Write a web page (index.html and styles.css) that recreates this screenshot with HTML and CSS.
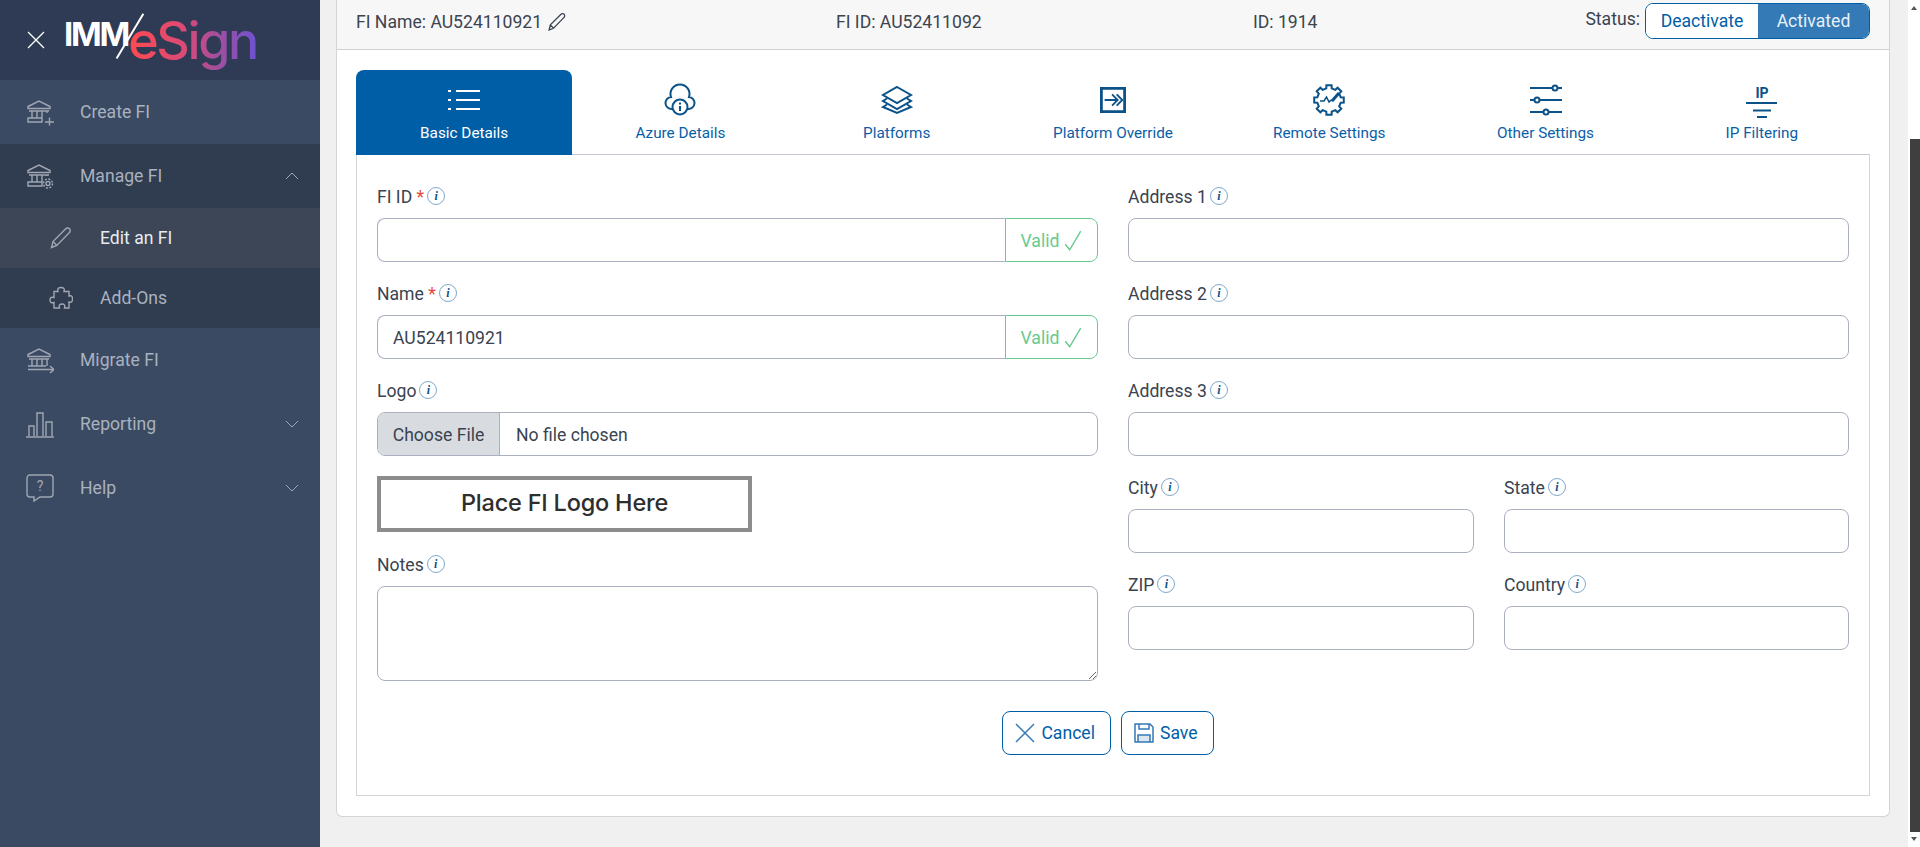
FILE: index.html
```html
<!DOCTYPE html>
<html lang="en">
<head>
<meta charset="utf-8">
<title>IMM eSign - Edit an FI</title>
<link rel="stylesheet" href="styles.css">
</head>
<body>
<aside class="sidebar">
  <div class="brand">
    <svg class="close-icon" viewBox="0 0 18 18"><path d="M1 1l16 16M17 1L1 17"/></svg>
    <div class="logo"><span class="logo-imm">IMM</span><span class="logo-slash"></span><span class="logo-esign">eSign</span></div>
  </div>
  <nav class="menu">
    <a class="item item-first">
      <svg class="item-icon" viewBox="0 0 28 28"><path d="M2 8.500 13 3l11 5.500v2H2zM3 13h20M6 13v7M11 13v7M16 13v7M21 13v2M2 20h14v4H2zM19 24h9M23.500 19.500v8"/></svg>
      <span>Create FI</span>
    </a>
    <a class="item item-open">
      <svg class="item-icon" viewBox="0 0 28 28"><path d="M2 8.500 13 3l11 5.500v2H2zM3 13h20M6 13v7M11 13v7M16 13v7M21 13v1M2 20h14v4H2z"/><circle cx="22" cy="21.500" r="2"/><circle cx="22" cy="21.500" r="4.500" stroke-dasharray="2 1.500"/></svg>
      <span>Manage FI</span>
      <svg class="chev" viewBox="0 0 14 8"><path d="M1 7l6-6 6 6"/></svg>
    </a>
    <a class="sub sub-active">
      <svg class="item-icon" viewBox="0 0 24 24"><path d="M2.500 21.500l1.500-6L16.500 3c1.300-1.300 3-1.300 4 -.3s1 2.800-.3 4L7.800 19.500zM4 15.500l4 4"/></svg>
      <span>Edit an FI</span>
    </a>
    <a class="sub">
      <svg class="item-icon" viewBox="0 0 24 24"><path d="M9 5.500C8 2 10 1.500 12 1.500S16 2 15 5.500h5V10c3-1 3.500 1 3.500 3s-.5 4-3.500 3v6h-4.500c1-3-.5-4-2.500-4s-3.500 1-2.500 4H5v-5.500c-3 1-4-.5-4-2.500s1-3.500 4-2.500v-6z"/></svg>
      <span>Add-Ons</span>
    </a>
    <a class="item">
      <svg class="item-icon" viewBox="0 0 28 28"><path d="M2 8.500 13 3l11 5.500v2H2zM3 13h20M6 13v7M11 13v7M16 13v7M21 13v7M2 20h18M2 23.500h26M24 20l4 3.500-4 3.500"/></svg>
      <span>Migrate FI</span>
    </a>
    <a class="item">
      <svg class="item-icon" viewBox="0 0 28 28"><path d="M0 27h28M3 26V16h5v10M11 26V3h6v23M20 26V12h6v14"/></svg>
      <span>Reporting</span>
      <svg class="chev" viewBox="0 0 14 8"><path d="M1 1l6 6 6-6"/></svg>
    </a>
    <a class="item">
      <svg class="item-icon" viewBox="0 0 28 28"><path d="M4 1h20a3 3 0 0 1 3 3v16a3 3 0 0 1-3 3H14l-6 4v-4H4a3 3 0 0 1-3-3V4a3 3 0 0 1 3-3z"/><text class="help-mark" x="14" y="17">?</text></svg>
      <span>Help</span>
      <svg class="chev" viewBox="0 0 14 8"><path d="M1 1l6 6 6-6"/></svg>
    </a>
  </nav>
</aside>

<main class="main">
  <section class="card">
    <header class="card-head">
      <div class="head-cell head-name">FI Name: AU524110921
        <svg class="head-pencil" viewBox="0 0 24 24"><path d="M2.500 21.500l1.500-6L16.500 3c1.300-1.300 3-1.300 4-.3s1 2.800-.3 4L7.800 19.500zM4 15.500l4 4"/></svg>
      </div>
      <div class="head-cell head-fi">FI ID: AU52411092</div>
      <div class="head-cell head-id">ID: 1914</div>
      <div class="head-status">
        <span class="status-label">Status:</span>
        <div class="toggle"><button class="toggle-off">Deactivate</button><button class="toggle-on">Activated</button></div>
      </div>
    </header>
    <div class="card-body">
      <div class="tabs">
        <a class="tab tab-active">
          <svg class="tab-icon" viewBox="0 0 32 24"><path d="M8 3h24M8 12h24M8 21h24M0 3h3M0 12h3M0 21h3"/></svg>
          <span>Basic Details</span>
        </a>
        <a class="tab">
          <svg class="tab-icon" viewBox="0 0 32 32"><path d="M8 25A6 6 0 0 1 7 13 9.500 9.500 0 1 1 25 13 6 6 0 0 1 24 25"/><circle cx="16" cy="23" r="7.500"/><path d="M16 22v5M16 18.500v2"/></svg>
          <span>Azure Details</span>
        </a>
        <a class="tab">
          <svg class="tab-icon" viewBox="0 0 32 30"><path d="M16 2 30 10 16 18 2 10zM6 13.500 2 16l14 8 14-8-4-2.500M6 19.500 2 22l14 6 14-6-4-2.500"/></svg>
          <span>Platforms</span>
        </a>
        <a class="tab">
          <svg class="tab-icon tab-icon-sm" viewBox="0 0 28 28"><path class="thick" d="M1.500 1.500h25v25h-25z"/><path d="M5 14h14M13 8l6 6-6 6M18 8l6 6-6 6"/></svg>
          <span>Platform Override</span>
        </a>
        <a class="tab">
          <svg class="tab-icon" viewBox="0 0 32 32"><path d="M13.300 4.310 13.400 1.230H18.600L18.700 4.310 22.360 5.820 24.610 3.720 28.280 7.390 26.180 9.640 27.690 13.300 30.770 13.400V18.600L27.690 18.700 26.180 22.360 28.280 24.610 24.610 28.280 22.360 26.180 18.700 27.690 18.600 30.770H13.400L13.300 27.690 9.640 26.180 7.390 28.280 3.720 24.610 5.820 22.360 4.310 18.700 1.230 18.600V13.400L4.310 13.300 5.820 9.640 3.720 7.390 7.390 3.720 9.640 5.820z"/><path class="thin" d="M7 17h4l2.500-4 2.500 5 1.500-1.500H20"/><path class="thick" d="M19 17l7-8"/></svg>
          <span>Remote Settings</span>
        </a>
        <a class="tab">
          <svg class="tab-icon" viewBox="0 0 32 30"><path d="M0 3h22M28 3h4M0 15h4M10 15h22M0 27h13M19 27h13"/><circle cx="25" cy="3" r="2.500"/><circle cx="7" cy="15" r="2.500"/><circle cx="16" cy="27" r="2.500"/></svg>
          <span>Other Settings</span>
        </a>
        <a class="tab">
          <svg class="tab-icon" viewBox="0 0 32 32"><text class="ip-mark" x="16" y="14">IP</text><path d="M0 19h31M7 26.500h18M11 33h10"/></svg>
          <span>IP Filtering</span>
        </a>
      </div>

      <form class="form">
        <div class="col col-left">
          <div class="field">
            <div class="label">FI ID <em>*</em><i class="info">i</i></div>
            <div class="group"><input class="input input-join" type="text"><span class="valid">Valid <svg viewBox="0 0 16 20"><path d="M1 13l4 5L15 1"/></svg></span></div>
          </div>
          <div class="field">
            <div class="label">Name <em>*</em><i class="info">i</i></div>
            <div class="group"><input class="input input-join" type="text" value="AU524110921"><span class="valid">Valid <svg viewBox="0 0 16 20"><path d="M1 13l4 5L15 1"/></svg></span></div>
          </div>
          <div class="field field-logo">
            <div class="label">Logo<i class="info">i</i></div>
            <div class="file"><span class="file-btn">Choose File</span><span class="file-name">No file chosen</span></div>
          </div>
          <div class="logo-box">Place FI Logo Here</div>
          <div class="field">
            <div class="label">Notes<i class="info">i</i></div>
            <textarea class="notes"></textarea>
          </div>
        </div>
        <div class="col col-right">
          <div class="field">
            <div class="label">Address 1<i class="info">i</i></div>
            <input class="input" type="text">
          </div>
          <div class="field">
            <div class="label">Address 2<i class="info">i</i></div>
            <input class="input" type="text">
          </div>
          <div class="field">
            <div class="label">Address 3<i class="info">i</i></div>
            <input class="input" type="text">
          </div>
          <div class="pair">
            <div class="field">
              <div class="label">City<i class="info">i</i></div>
              <input class="input" type="text">
            </div>
            <div class="field">
              <div class="label">State<i class="info">i</i></div>
              <input class="input" type="text">
            </div>
          </div>
          <div class="pair">
            <div class="field">
              <div class="label">ZIP<i class="info">i</i></div>
              <input class="input" type="text">
            </div>
            <div class="field">
              <div class="label">Country<i class="info">i</i></div>
              <input class="input" type="text">
            </div>
          </div>
        </div>
      </form>

      <div class="actions">
        <button class="btn" type="button"><svg viewBox="0 0 20 20"><path d="M1 1l18 18M19 1 1 19"/></svg>Cancel</button>
        <button class="btn" type="button"><svg viewBox="0 0 20 20"><path class="save-fill" d="M4 12h12v7H4z"/><path d="M1 1h15l3 3v15H1zM5 1v5h10V1M4 19v-7h12v7"/></svg>Save</button>
      </div>
    </div>
  </section>
</main>

<div class="scrollbar">
  <span class="arrow-up"></span>
  <div class="thumb"></div>
  <span class="arrow-down"></span>
</div>
</body>
</html>
```
FILE: styles.css
```css
* { box-sizing: border-box; }
html, body { height: 100%; }
body {
  margin: 0;
  display: flex;
  height: 847px;
  overflow: hidden;
  background: #f0f0f0;
  color: #3a4350;
  font-family: Roboto, "Liberation Sans", sans-serif;
  font-size: 17.600px;
}

/* Sidebar */
.sidebar { width: 320px; flex: none; background: #3b4a63; }
.brand { height: 80px; background: #2f3b54; display: flex; align-items: center; padding-left: 27px; }
.close-icon { width: 18px; height: 18px; fill: none; stroke: #fff; stroke-width: 1.300; }
.logo { display: flex; align-items: center; position: relative; margin-left: 19px; height: 60px; }
.logo-imm { font-family: Inter, Roboto, sans-serif; font-weight: 700; font-size: 33px; letter-spacing: -2.200px; color: #fff; margin-top: -12px; }
.logo-slash { position: absolute; left: 65px; top: 0; width: 1.600px; height: 52px; background: #fff; transform: rotate(31deg); }
.logo-esign {
  font-family: Inter, Roboto, sans-serif;
  font-weight: 500;
  font-size: 52px;
  letter-spacing: -2.400px;
  background: linear-gradient(90deg, #ff4a4f 0%, #d84a78 45%, #a04fa0 70%, #6e52d0 100%);
  -webkit-background-clip: text;
  background-clip: text;
  color: transparent;
}
.menu { display: flex; flex-direction: column; }
.item, .sub { display: flex; align-items: center; color: #a9b2bf; }
.item { height: 64px; padding: 0 21px 0 26px; }
.item-open { background: #303c50; }
.sub { height: 60px; padding-left: 49px; background: #303c50; }
.sub-active { background: #3c4656; color: #e8ecf1; }
.item-icon { width: 28px; height: 28px; flex: none; fill: none; stroke: #a0a7b3; stroke-width: 1.400; margin-right: 26px; }
.sub .item-icon { width: 24px; height: 24px; margin-right: 27px; }
.help-mark { font-size: 14px; fill: #a0a7b3; stroke: none; text-anchor: middle; }
.chev { width: 14px; height: 8px; margin-left: auto; fill: none; stroke: #a0a7b3; stroke-width: 1; }

/* Main */
.main { flex: 1; padding-left: 16px; padding-right: 18px; min-width: 0; }
.card { height: 817px; background: #fff; border: 1px solid #d4d4d4; border-top: 0; border-radius: 0 0 6px 6px; display: flex; flex-direction: column; }
.card-head { height: 50px; flex: none; background: #f7f7f7; border-bottom: 1px solid #d0d0d0; display: flex; align-items: center; padding: 0 19px; }
.head-cell { color: #3c4450; padding-bottom: 5px; }
.head-name { width: 480px; display: flex; align-items: center; gap: 5px; }
.head-fi { width: 417px; }
.head-id { width: 300px; }
.head-pencil { width: 20px; height: 20px; fill: none; stroke: #3c4450; stroke-width: 1.500; }
.head-status { margin-left: auto; display: flex; align-items: center; gap: 5px; padding-bottom: 8px; }
.status-label { margin-top: -4px; }
.toggle { display: flex; height: 36px; border: 1px solid #005ea6; border-radius: 8px; overflow: hidden; }
.toggle button { border: 0; font: inherit; padding: 1px 0 0; }
.toggle-off { width: 112px; background: #fff; color: #005ea6; }
.toggle-on { width: 111px; background: #337ab7; color: #e8f0f8; }

.card-body { flex: 1; padding: 20px 19px; display: flex; flex-direction: column; }
.tabs { display: flex; height: 85px; flex: none; border-bottom: 1px solid #c8c8d4; }
.tab { flex: 1; display: flex; flex-direction: column; align-items: center; color: #0a5ea8; font-size: 15.300px; padding-top: 14px; }
.tab span { margin-top: 8px; white-space: nowrap; }
.tab-active { background: #005ea6; color: #fff; border-radius: 8px 8px 0 0; margin-bottom: -1px; }
.tab-icon { height: 32px; width: 32px; flex: none; fill: none; stroke: #0b5288; stroke-width: 2; overflow: visible; }
.tab-icon-sm { width: 26px; height: 26px; margin: 3px 0; }
.tab-active .tab-icon { stroke: #fff; }
.thick { stroke-width: 3; }
.thin { stroke-width: 1.500; }
.ip-mark { font-size: 14px; font-weight: 700; fill: #0b5288; stroke: none; text-anchor: middle; }

.form { flex: none; display: grid; grid-template-columns: 721px 721px; column-gap: 30px; padding: 29px 20px 0; border-left: 1px solid #d4d4d4; border-right: 1px solid #d4d4d4; }
.col { display: flex; flex-direction: column; min-width: 0; }
.field { min-width: 0; margin-bottom: 19px; }
.field-logo { margin-bottom: 20px; }
.label { height: 24px; line-height: 26px; margin-bottom: 10px; color: #3a4350; white-space: nowrap; }
.label em { color: #e8493f; font-style: normal; }
.info {
  display: inline-block;
  width: 18px;
  height: 18px;
  margin-left: 3px;
  border: 1px solid #7fa8cc;
  border-radius: 50%;
  color: #0b5288;
  font: italic 700 12px/16px "Liberation Serif", serif;
  text-align: center;
  vertical-align: 3px;
}
.input { display: block; width: 100%; height: 44px; border: 1px solid #aab0c0; border-radius: 8px; background: #fff; padding: 1px 15px 0; font: inherit; color: #3a4350; }
.group { display: flex; }
.input-join { flex: 1; min-width: 0; border-radius: 8px 0 0 8px; border-right: 0; }
.valid { width: 93px; height: 44px; flex: none; border: 1px solid #68ca8e; border-radius: 0 8px 8px 0; color: #68ca8e; display: flex; align-items: center; justify-content: center; gap: 5px; padding-top: 1px; }
.valid svg { width: 18px; height: 22px; fill: none; stroke: #68ca8e; stroke-width: 1.300; }
.file { display: flex; height: 44px; border: 1px solid #aab0c0; border-radius: 8px; overflow: hidden; align-items: center; }
.file-btn { width: 122px; height: 100%; padding-top: 1px; background: #d8dbe0; border-right: 1px solid #aab0c0; display: flex; align-items: center; justify-content: center; color: #3a4350; }
.file-name { margin-left: 16px; padding-top: 1px; }
.logo-box {
  width: 375px;
  height: 56px;
  border: 4px solid #8c8c8c;
  margin-bottom: 20px;
  padding-bottom: 3px;
  display: flex;
  align-items: center;
  justify-content: center;
  font-family: Inter, Roboto, sans-serif;
  font-weight: 500;
  font-size: 23.500px;
  color: #2e2e2e;
  letter-spacing: -.2px;
}
.notes { display: block; width: 100%; height: 95px; border: 1px solid #aab0c0; border-radius: 8px; background: #fff; font: inherit; }
.pair { display: grid; grid-template-columns: 346px 345px; column-gap: 30px; }

.actions { flex: 1; display: flex; justify-content: center; gap: 10px; padding: 11px 10px 0 0; border: 1px solid #d4d4d4; border-top: 0; }
.btn { height: 44px; display: flex; align-items: center; gap: 6px; padding: 0 15px 0 12px; background: #fff; border: 1px solid #005ea6; border-radius: 8px; color: #005ea6; font: inherit; }
.btn svg { width: 20px; height: 20px; fill: none; stroke: #337ab7; stroke-width: 1.500; }
.save-fill { fill: #dbe6f0; stroke: none; }

/* Scrollbar */
.scrollbar { width: 12px; flex: none; background: #fff; display: flex; flex-direction: column; align-items: center; }
.arrow-up, .arrow-down { width: 0; height: 0; border-left: 3px solid transparent; border-right: 3px solid transparent; }
.arrow-up { border-bottom: 4px solid #555; margin-top: 6px; }
.arrow-down { border-top: 4px solid #555; margin-bottom: 6px; }
.thumb { width: 10px; height: 693px; margin: 129px 0 5px 2px; background: #3f3f3f; }
```
